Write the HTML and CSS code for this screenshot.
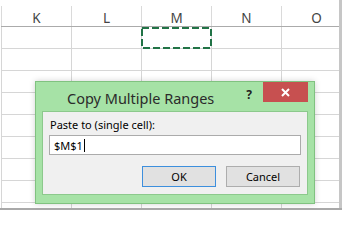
FILE: index.html
```html
<!DOCTYPE html>
<html>
<head>
<meta charset="utf-8">
<link rel="stylesheet" href="styles.css">
</head>
<body>
<div class="app">
  <div class="main">
    <div class="sheet">
      <div class="row head">
        <div class="hcell">K</div><div class="hcell">L</div><div class="hcell">M</div><div class="hcell">N</div><div class="hcell">O</div>
      </div>
      <div class="row">
        <div class="cell"></div><div class="cell"></div>
        <div class="cell sel"><svg class="marquee" width="71" height="22" viewBox="0 0 71 22"><rect x="1" y="1" width="69" height="20" fill="none" stroke="#217346" stroke-width="2" stroke-dasharray="7 3"/></svg></div>
        <div class="cell"></div><div class="cell"></div>
      </div>
      <div class="row"><div class="cell"></div><div class="cell"></div><div class="cell"></div><div class="cell"></div><div class="cell"></div></div>
      <div class="row"><div class="cell"></div><div class="cell"></div><div class="cell"></div><div class="cell"></div><div class="cell"></div></div>
      <div class="row"><div class="cell"></div><div class="cell"></div><div class="cell"></div><div class="cell"></div><div class="cell"></div></div>
      <div class="row"><div class="cell"></div><div class="cell"></div><div class="cell"></div><div class="cell"></div><div class="cell"></div></div>
      <div class="row"><div class="cell"></div><div class="cell"></div><div class="cell"></div><div class="cell"></div><div class="cell"></div></div>
      <div class="row"><div class="cell"></div><div class="cell"></div><div class="cell"></div><div class="cell"></div><div class="cell"></div></div>
      <div class="row"><div class="cell"></div><div class="cell"></div><div class="cell"></div><div class="cell"></div><div class="cell"></div></div>
      <div class="row"><div class="cell"></div><div class="cell"></div><div class="cell"></div><div class="cell"></div><div class="cell"></div></div>
    </div>
    <div class="vbar"></div>
  </div>
  <div class="hbar"></div>
</div>

<div class="dialog">
  <div class="titlebar">
    <div class="title">Copy Multiple Ranges</div>
    <div class="help">?</div>
    <div class="close"><svg width="9" height="9" viewBox="0 0 9 9"><path d="M1 1 L8 8 M8 1 L1 8" stroke="#ffffff" stroke-width="2"/></svg></div>
  </div>
  <div class="panel">
    <div class="label">Paste to (single cell):</div>
    <div class="input"><span class="value">$M$1</span><span class="caret"></span></div>
    <div class="buttons">
      <div class="btn default">OK</div>
      <div class="btn">Cancel</div>
    </div>
  </div>
</div>
</body>
</html>
```

FILE: styles.css
```css
html, body {
  margin: 0;
  padding: 0;
  width: 342px;
  height: 210px;
  overflow: hidden;
  background: #ffffff;
  font-family: "Noto Sans", "Open Sans", sans-serif;
}

.app {
  display: flex;
  flex-direction: column;
  width: 342px;
  height: 210px;
}

.main {
  display: flex;
  height: 208px;
  overflow: hidden;
}

.sheet {
  width: 339px;
  padding-left: 1px;
  box-sizing: border-box;
  overflow: hidden;
}

.vbar {
  width: 3px;
  background: #c6c6c6;
}

.hbar {
  height: 2px;
  background: #a9a9a9;
}

.row {
  display: flex;
  height: 22px;
  box-sizing: border-box;
  border-bottom: 1px solid #d6d6d6;
}

.row.head {
  height: 27px;
  border-bottom: 1px solid #ababab;
  align-items: flex-end;
}

.hcell {
  flex: 0 0 70px;
  height: 20px;
  box-sizing: border-box;
  border-left: 1px solid #dadada;
  text-align: center;
  font-size: 13.5px;
  line-height: 18px;
  padding-top: 3px;
  color: #444444;
}

.cell {
  flex: 0 0 70px;
  box-sizing: border-box;
  border-left: 1px solid #d6d6d6;
}

.cell.sel {
  position: relative;
}

.marquee {
  position: absolute;
  left: -1px;
  top: 0;
  display: block;
}

.dialog {
  position: absolute;
  left: 35px;
  top: 81px;
  width: 280px;
  height: 123px;
  box-sizing: border-box;
  border: 1px solid #80c280;
  background: #a6e2a6;
  box-shadow: 0 0 6px rgba(0, 0, 0, 0.18);
  display: flex;
  flex-direction: column;
}

.titlebar {
  display: flex;
  height: 29px;
  align-items: center;
}

.title {
  flex: 1;
  padding-left: 31px;
  font-size: 14.5px;
  color: #2b2b2b;
  padding-top: 2px;
}

.help {
  font-size: 12px;
  font-weight: bold;
  color: #222222;
  margin-right: 11px;
  align-self: flex-start;
  padding-top: 4px;
}

.close {
  align-self: flex-start;
  width: 45px;
  height: 20px;
  margin-right: 6px;
  background: #c75050;
  display: flex;
  align-items: center;
  justify-content: center;
}

.close svg {
  display: block;
}

.panel {
  margin: 0 6px 8px 6px;
  height: 84px;
  box-sizing: border-box;
  border: 1px solid #8cc98c;
  background: #f0f0f0;
  padding: 5px 6px 0 6px;
}

.label {
  font-size: 11px;
  line-height: 15px;
  padding-left: 1px;
  color: #000000;
}

.input {
  margin-top: 3px;
  height: 20px;
  box-sizing: border-box;
  border: 1px solid #ababab;
  background: #ffffff;
  display: flex;
  align-items: center;
  padding-left: 4px;
  font-size: 11px;
  color: #000000;
}

.caret {
  display: inline-block;
  width: 1px;
  height: 13px;
  background: #000000;
  margin-left: 1px;
}

.buttons {
  display: flex;
  justify-content: flex-end;
  gap: 10px;
  margin-top: 11px;
  padding-right: 1px;
}

.btn {
  width: 74px;
  height: 21px;
  box-sizing: border-box;
  border: 1px solid #adadad;
  background: #e1e1e1;
  font-size: 11px;
  display: flex;
  align-items: center;
  justify-content: center;
  color: #000000;
}

.btn.default {
  border-color: #3d8fdd;
}
```
